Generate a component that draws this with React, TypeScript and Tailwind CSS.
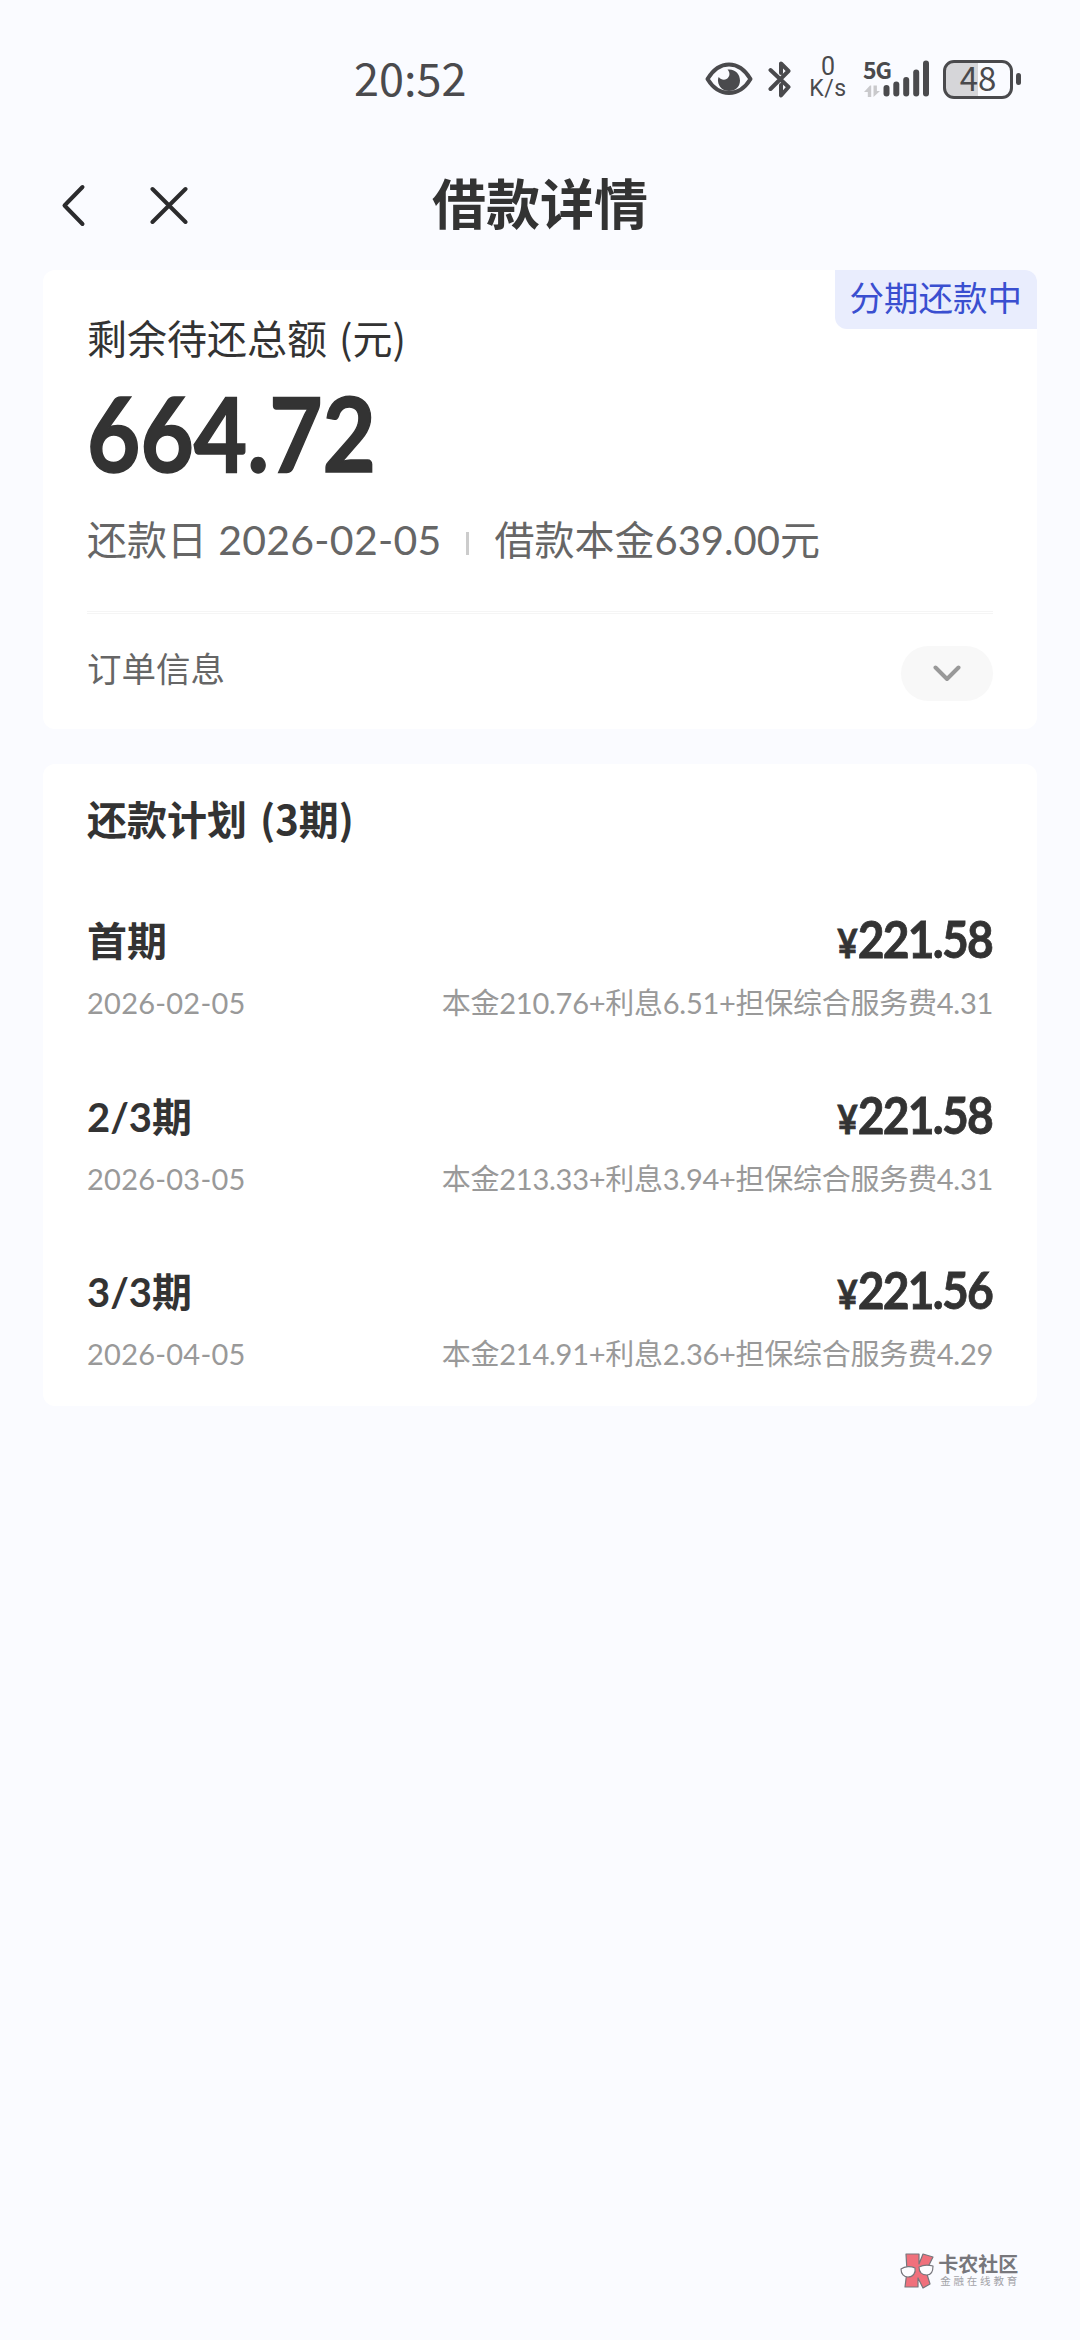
import React, { useState } from 'react';

interface Installment {
  label: string;
  date: string;
  amount: string;
  detail: string;
}

const installments: Installment[] = [
  { label: '首期', date: '2026-02-05', amount: '221.58', detail: '本金210.76+利息6.51+担保综合服务费4.31' },
  { label: '2/3期', date: '2026-03-05', amount: '221.58', detail: '本金213.33+利息3.94+担保综合服务费4.31' },
  { label: '3/3期', date: '2026-04-05', amount: '221.56', detail: '本金214.91+利息2.36+担保综合服务费4.29' },
];

const EyeIcon = () => (
  <svg width="48" height="34" viewBox="0 0 48 34" fill="none">
    <path d="M2.5 17C8 8 15 2.5 24 2.5S40 8 45.500 17C40 26 33 31 24 31S8 26 2.500 17Z" stroke="#4a4a4d" strokeWidth="4" strokeLinejoin="round" />
    <path d="M22.500 7.500C30 6.500 35 12 35 18.500C35 25 30 29 24 29C18 29 13.500 25 13 19C12.900 17.500 13.200 16 13.800 15C15.500 17.500 19 18.500 21.500 17C25 15 25.500 10.500 22.500 7.500Z" fill="#4a4a4d" />
  </svg>
);

const BluetoothIcon = () => (
  <svg width="24" height="37" viewBox="0 0 24 37" fill="none" stroke="#4a4a4d" strokeWidth="4" strokeLinecap="round" strokeLinejoin="round">
    <path d="M2.500 9L20.500 26L13 34.500V24M2.500 28L20.500 10L13 2.500V12" />
  </svg>
);

const SignalIcon = () => (
  <svg width="66" height="38" viewBox="0 0 66 38">
    <g fill="#c9c9cc">
      <path d="M6 25.500L0 32h3.800v5h3.400V25.500Z" />
      <path d="M9.500 25.500h3.400V31H16L9.500 37Z" />
    </g>
    <g fill="#4a4a4d">
      <rect x="19.500" y="25" width="6" height="11.500" rx="3" />
      <rect x="29.300" y="21.500" width="6" height="15" rx="3" />
      <rect x="39.200" y="17" width="6" height="19.500" rx="3" />
      <rect x="49.200" y="9.500" width="6" height="27" rx="3" />
      <rect x="59" y="0.500" width="6" height="36" rx="3" />
    </g>
  </svg>
);

const StatusBar = () => (
  <div className="flex h-[158px] items-center justify-between pr-[59px] pl-[354px] font-['Noto_Sans_CJK_SC',sans-serif] text-[#4a4a4d]">
    <span className="pb-[4px] text-[45px] leading-[48px]">20:52</span>
    <div className="flex items-center">
      <EyeIcon />
      <span className="ml-[15px]"><BluetoothIcon /></span>
      <div className="ml-[17px] flex w-[38px] flex-col items-center pb-[3px] font-['Roboto',sans-serif]">
        <span className="text-[25px] leading-[22px]">0</span>
        <span className="text-[23px] leading-[21px] tracking-[0.500px]">K/s</span>
      </div>
      <div className="relative ml-[17px]">
        <SignalIcon />
        <span className="absolute -top-[3px] -left-[1px] text-[23px] leading-[24px] font-bold tracking-[-1px]">5G</span>
      </div>
      <div className="ml-[13px] flex items-center gap-[3px]">
        <div className="flex h-[39px] w-[70px] items-center justify-center rounded-[11px] border-[3px] border-[#4a4a4d] bg-linear-to-r from-[#d6d6d9] from-50% to-transparent to-50%">
          <span className="pb-[4px] text-[33px] leading-[33px]">48</span>
        </div>
        <div className="h-[12px] w-[5px] rounded-full bg-[#4a4a4d]" />
      </div>
    </div>
  </div>
);

const NavBar = () => (
  <div className="mt-[1px] grid h-[92px] grid-cols-3 items-center px-[60px]">
    <div className="flex items-center gap-[62px]">
      <svg width="28" height="44" viewBox="0 0 28 44" fill="none" stroke="#2b2b2d" strokeWidth="4" strokeLinecap="round" strokeLinejoin="round">
        <path d="M22.500 4L4.500 22.500L22.500 41" />
      </svg>
      <svg width="38" height="38" viewBox="0 0 38 38" fill="none" stroke="#2b2b2d" strokeWidth="4" strokeLinecap="round">
        <path d="M2.500 3L35.500 36M35.500 3L2.500 36" />
      </svg>
    </div>
    <h1 className="text-center text-[54px] leading-[60px] font-bold">借款详情</h1>
  </div>
);

const SummaryCard = () => {
  const [isOpen, setIsOpen] = useState(false);

  return (
    <section className="relative rounded-[12px] bg-white px-[44px] pt-[42px] pb-[28px]">
      <span className="absolute top-0 right-0 h-[59px] rounded-tr-[12px] rounded-bl-[12px] bg-[#e9edfd] px-[15px] text-[34.500px] leading-[55px] text-[#3a4fd0]">分期还款中</span>
      <p className="font-['Noto_Sans_CJK_SC',sans-serif] text-[40px] leading-[50px] [word-spacing:3px]">剩余待还总额 (元)</p>
      <p className="mt-[18px] origin-left scale-x-[0.89] text-[103.500px] leading-[104px] font-bold [-webkit-text-stroke:1.500px_#333]">664.72</p>
      <div className="mt-[31px] flex items-center text-[40px] leading-[50px] text-[#666]">
        <span className="whitespace-pre [word-spacing:1px]">还款日 <span className="text-[41px] tracking-[0.250px]">2026-02-05</span></span>
        <i className="mt-[6px] mr-[25px] ml-[25px] h-[23px] w-[3px] bg-[#ccc]" />
        <span>借款本金639.00元</span>
      </div>
      <div className="mt-[46px] h-[3px] border-y border-[#f5f5f5]" />
      <div className="mt-[32px] flex h-[55px] items-start justify-between">
        <span className="text-[34.500px] leading-[45px] text-[#666]">订单信息</span>
        <button onClick={() => setIsOpen(!isOpen)} className="flex h-[55px] w-[92px] items-center justify-center rounded-full bg-[#f8f8f8]">
          <svg width="28" height="18" viewBox="0 0 28 18" fill="none" stroke="#999" strokeWidth="4" strokeLinecap="round" strokeLinejoin="round">
            <path d="M2.500 2.500L14 14L25.500 2.500" />
          </svg>
        </button>
      </div>
    </section>
  );
};

const PlanRow: React.FC<{ item: Installment }> = ({ item }) => (
  <li>
    <div className="flex h-[56px] items-start justify-between font-bold">
      <span className="text-[40px] leading-[55px]">{item.label}</span>
      <span className="origin-right scale-x-[0.88] pr-[1px] text-[52.500px] leading-[48px] tracking-[-2px] [-webkit-text-stroke:0.800px_#333]">
        <span className="mr-[2px] text-[40px]">¥</span>{item.amount}
      </span>
    </div>
    <div className="mt-[13px] flex justify-between text-[29px] leading-[40px] text-[#999]">
      <span className="tracking-[0.250px]">{item.date}</span>
      <span className="tracking-[-0.260px]">{item.detail}</span>
    </div>
  </li>
);

const PlanCard = () => (
  <section className="mt-[35px] rounded-[12px] bg-white px-[44px] pt-[29px] pb-[32px]">
    <h2 className="font-['Noto_Sans_CJK_SC',sans-serif] text-[40px] leading-[50px] font-bold [word-spacing:4px]">还款计划 (3期)</h2>
    <ul className="mt-[71px] space-y-[66.500px]">
      {installments.map(item => <PlanRow key={item.date} item={item} />)}
    </ul>
  </section>
);

const Watermark = () => (
  <div className="mt-auto flex items-center gap-[4px] self-end pr-[60px] pb-[51px]">
    <svg width="34" height="36" viewBox="0 0 34 36" stroke="#77767c" strokeWidth="1.200" strokeLinejoin="round">
      <path d="M6 1H19V11L23 1L33 4L26 18L30 31L23 35L18 25V34H5L7 18Z" fill="#f0707c" />
      <path d="M1 16C5 13 11 13 15 15C16 20 13 24 8 24C4 24 1 21 1 16ZM19 14C23 12 29 12 33 13C33 19 31 22 27 22C22 22 19 19 19 14Z" fill="#fdfdff" />
    </svg>
    <div className="flex flex-col">
      <span className="text-[20px] leading-[20px] font-bold text-[#77777c]">卡农社区</span>
      <span className="mt-[1px] ml-[2px] text-[10.500px] leading-[13px] tracking-[2.800px] text-[#a3a3a8]">金融在线教育</span>
    </div>
  </div>
);

export default function App() {
  return (
    <div className="flex h-[2340px] w-[1080px] flex-col overflow-hidden bg-[#fafbff] font-['Lato','Noto_Sans_CJK_SC',sans-serif] text-[#333]">
      <StatusBar />
      <NavBar />
      <main className="mx-[43px] mt-[19px]">
        <SummaryCard />
        <PlanCard />
      </main>
      <Watermark />
    </div>
  );
}
